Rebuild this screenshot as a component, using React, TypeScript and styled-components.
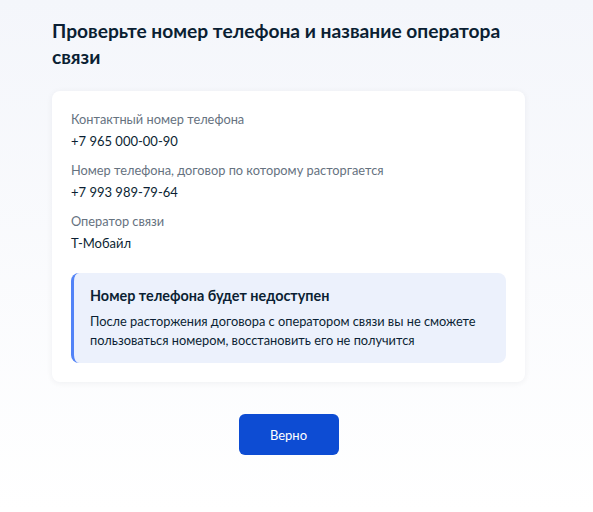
import React from 'react';
import styled, { createGlobalStyle } from 'styled-components';

const GlobalStyle = createGlobalStyle`
  html, body {
    margin: 0;
    padding: 0;
  }
  body {
    font-family: Lato, "Noto Sans", "Liberation Sans", sans-serif;
    color: #0b1f33;
    background: linear-gradient(180deg, #f4f6fb 0%, #ffffff 100%);
    min-height: 512px;
  }
`;

const Page = styled.div`
  width: 593px;
  min-height: 512px;
  box-sizing: border-box;
  padding: 18px 52px 0 52px;
  display: flex;
  flex-direction: column;
`;

const Title = styled.h1`
  margin: 0 0 21px 0;
  font-size: 19.2px;
  line-height: 26px;
  font-weight: 700;
  color: #0b1f33;
  width: 480px;
`;

const Card = styled.div`
  width: 473px;
  box-sizing: border-box;
  background: #ffffff;
  border-radius: 8px;
  box-shadow: 0 1px 6px rgba(11, 31, 51, 0.06);
  padding: 18px 19px 19px 19px;
`;

const Field = styled.div`
  display: flex;
  flex-direction: column;
  margin-bottom: 7px;
`;

const Label = styled.div`
  font-size: 12.8px;
  line-height: 20px;
  color: #66727f;
`;

const Value = styled.div`
  font-size: 13px;
  line-height: 24px;
  color: #0b1f33;
`;

const Alert = styled.div`
  margin-top: 18px;
  background: #ecf1fc;
  border-radius: 8px;
  border-left: 3px solid #5283f7;
  padding: 13px 16px 13px 16px;
`;

const AlertTitle = styled.div`
  font-size: 14.4px;
  line-height: 20px;
  font-weight: 700;
  color: #0b1f33;
  margin-bottom: 6px;
`;

const AlertText = styled.div`
  font-size: 12.8px;
  line-height: 19px;
  color: #0b1f33;
`;

const Actions = styled.div`
  width: 473px;
  display: flex;
  justify-content: center;
  margin-top: 32px;
`;

const Button = styled.button`
  width: 100px;
  height: 41px;
  border: none;
  border-radius: 6px;
  background: #0d4cd3;
  color: #ffffff;
  font-family: Lato, "Noto Sans", "Liberation Sans", sans-serif;
  font-size: 13px;
  cursor: pointer;
`;

const fields = [
  { label: 'Контактный номер телефона', value: '+7 965 000-00-90' },
  { label: 'Номер телефона, договор по которому расторгается', value: '+7 993 989-79-64' },
  { label: 'Оператор связи', value: 'Т-Мобайл' },
];

export default function App() {
  return (
    <>
      <GlobalStyle />
      <Page>
        <Title>Проверьте номер телефона и название оператора связи</Title>
        <Card>
          {fields.map((f) => (
            <Field key={f.label}>
              <Label>{f.label}</Label>
              <Value>{f.value}</Value>
            </Field>
          ))}
          <Alert>
            <AlertTitle>Номер телефона будет недоступен</AlertTitle>
            <AlertText>
              После расторжения договора с оператором связи вы не сможете пользоваться номером, восстановить его не получится
            </AlertText>
          </Alert>
        </Card>
        <Actions>
          <Button>Верно</Button>
        </Actions>
      </Page>
    </>
  );
}
